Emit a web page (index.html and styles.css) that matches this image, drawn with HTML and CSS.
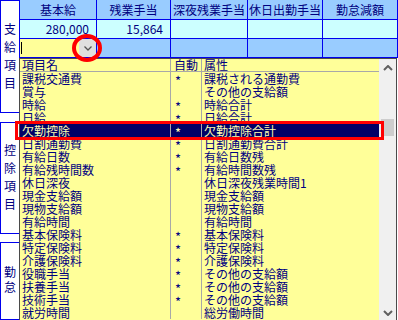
FILE: index.html
```html
<!DOCTYPE html>
<html lang="ja">
<head>
    <meta charset="UTF-8">
    <meta name="viewport" content="width=device-width, initial-scale=1.0">
    <title>給与項目設定</title>
    <link rel="stylesheet" href="styles.css">
</head>
<body>

    <div class="screen">
        <!-- Left group labels -->
        <div class="side">
            <div class="side-box box-pay">
                <span>支</span><span>給</span><span>項</span><span>目</span>
            </div>
            <div class="side-box box-deduct">
                <span>控</span><span>除</span><span>項</span><span>目</span>
            </div>
            <div class="side-box box-attend">
                <span>勤</span><span>怠</span>
            </div>
        </div>

        <!-- Item grid -->
        <div class="main">
            <div class="grid">
                <div class="cell head">基本給</div>
                <div class="cell head">残業手当</div>
                <div class="cell head">深夜残業手当</div>
                <div class="cell head">休日出勤手当</div>
                <div class="cell head">勤怠減額</div>

                <div class="cell val">280,000</div>
                <div class="cell val">15,864</div>
                <div class="cell val"></div>
                <div class="cell val"></div>
                <div class="cell val"></div>

                <div class="cell input">
                    <span class="caret"></span>
                    <span class="drop-btn">
                        <svg width="8" height="5" viewBox="0 0 8 5"><polyline points="0.5,0.5 4,4 7.5,0.5" fill="none" stroke="#555" stroke-width="1.3"/></svg>
                    </span>
                </div>
                <div class="cell blank"></div>
                <div class="cell blank"></div>
                <div class="cell blank"></div>
                <div class="cell blank"></div>
            </div>
        </div>

        <!-- Dropdown list -->
        <div class="popup">
            <div class="list">
                <div class="row list-head">
                    <span class="c-name">項目名</span><span class="c-auto">自動</span><span class="c-attr">属性</span>
                </div>
                <div class="row"><span class="c-name">課税交通費</span><span class="c-auto"><i class="star">*</i></span><span class="c-attr">課税される通勤費</span></div>
                <div class="row"><span class="c-name">賞与</span><span class="c-auto"></span><span class="c-attr">その他の支給額</span></div>
                <div class="row"><span class="c-name">時給</span><span class="c-auto"><i class="star">*</i></span><span class="c-attr">時給合計</span></div>
                <div class="row"><span class="c-name">日給</span><span class="c-auto"><i class="star">*</i></span><span class="c-attr">日給合計</span></div>
                <div class="row selected"><span class="c-name">欠勤控除</span><span class="c-auto"><i class="star">*</i></span><span class="c-attr">欠勤控除合計</span></div>
                <div class="row"><span class="c-name">日割通勤費</span><span class="c-auto"><i class="star">*</i></span><span class="c-attr">日割通勤費合計</span></div>
                <div class="row"><span class="c-name">有給日数</span><span class="c-auto"><i class="star">*</i></span><span class="c-attr">有給日数残</span></div>
                <div class="row"><span class="c-name">有給残時間数</span><span class="c-auto"><i class="star">*</i></span><span class="c-attr">有給時間数残</span></div>
                <div class="row"><span class="c-name">休日深夜</span><span class="c-auto"></span><span class="c-attr">休日深夜残業時間1</span></div>
                <div class="row"><span class="c-name">現金支給額</span><span class="c-auto"></span><span class="c-attr">現金支給額</span></div>
                <div class="row"><span class="c-name">現物支給額</span><span class="c-auto"></span><span class="c-attr">現物支給額</span></div>
                <div class="row"><span class="c-name">有給時間</span><span class="c-auto"></span><span class="c-attr">有給時間</span></div>
                <div class="row"><span class="c-name">基本保険料</span><span class="c-auto"><i class="star">*</i></span><span class="c-attr">基本保険料</span></div>
                <div class="row"><span class="c-name">特定保険料</span><span class="c-auto"><i class="star">*</i></span><span class="c-attr">特定保険料</span></div>
                <div class="row"><span class="c-name">介護保険料</span><span class="c-auto"><i class="star">*</i></span><span class="c-attr">介護保険料</span></div>
                <div class="row"><span class="c-name">役職手当</span><span class="c-auto"><i class="star">*</i></span><span class="c-attr">その他の支給額</span></div>
                <div class="row"><span class="c-name">扶養手当</span><span class="c-auto"><i class="star">*</i></span><span class="c-attr">その他の支給額</span></div>
                <div class="row"><span class="c-name">技術手当</span><span class="c-auto"><i class="star">*</i></span><span class="c-attr">その他の支給額</span></div>
                <div class="row"><span class="c-name">就労時間</span><span class="c-auto"></span><span class="c-attr">総労働時間</span></div>
            </div>
            <div class="scroll">
                <div class="sb-btn">
                    <svg width="10" height="6" viewBox="0 0 10 6"><polyline points="1,5 5,1 9,5" fill="none" stroke="#606060" stroke-width="2"/></svg>
                </div>
                <div class="sb-track">
                    <div class="sb-thumb"></div>
                </div>
                <div class="sb-btn">
                    <svg width="10" height="6" viewBox="0 0 10 6"><polyline points="1,1 5,5 9,1" fill="none" stroke="#606060" stroke-width="2"/></svg>
                </div>
            </div>
        </div>

        <!-- Annotation marks -->
        <div class="mark-circle"></div>
        <div class="mark-rect"></div>
    </div>

</body>
</html>
```

FILE: styles.css
```css
body {
    margin: 0;
    padding: 0;
    font-family: "Noto Sans CJK JP", sans-serif;
    font-size: 12px;
    color: #000080;
    background-color: #fff;
}
.screen {
    position: relative;
    width: 398px;
    height: 320px;
    overflow: hidden;
    display: flex;
}

/* Left labels */
.side {
    width: 20px;
    display: flex;
    flex-direction: column;
}
.side-box {
    box-sizing: border-box;
    border: 1px solid #0000ee;
    display: flex;
    flex-direction: column;
    align-items: center;
    line-height: 18px;
}
.box-pay {
    height: 113px;
    padding-top: 19px;
}
.box-deduct {
    height: 112px;
    margin-top: 9px;
    padding-top: 18px;
}
.box-attend {
    flex: 1;
    margin-top: 8px;
    padding-top: 21px;
    line-height: 15px;
}

/* Grid */
.main {
    width: 378px;
}
.grid {
    display: grid;
    grid-template-columns: 76px 73px 76px 74px 74px;
    grid-template-rows: 19px 18px 18px;
    gap: 1px;
    background: #0000ee;
    border-right: 1px solid #0000ee;
    border-bottom: 1px solid #0000ee;
}
.cell {
    white-space: nowrap;
    overflow: hidden;
}
.head {
    background: #99ccff;
    text-align: center;
    line-height: 19px;
}
.val {
    background: #ccffff;
    text-align: right;
    padding-right: 7px;
    line-height: 18px;
}
.blank {
    background: #99ccff;
}
.input {
    background: #ffff99;
    display: flex;
    justify-content: space-between;
}
.caret {
    width: 1px;
    height: 12px;
    margin: 3px 0 0 1px;
    background: #000;
}
.drop-btn {
    width: 17px;
    background: #e0e0e0;
    display: flex;
    align-items: center;
    justify-content: center;
    padding-top: 1px;
}

/* Dropdown */
.popup {
    position: absolute;
    left: 19px;
    top: 58px;
    width: 378px;
    height: 264px;
    box-sizing: border-box;
    border: 1px solid #4a4a4a;
    background: #ffff99;
    display: flex;
}
.list {
    width: 359px;
    overflow: hidden;
}
.row {
    display: flex;
    height: 13px;
    line-height: 13px;
    white-space: nowrap;
}
.list-head {
    height: 12px;
    line-height: 12px;
    border-bottom: 1px solid #a8a8a8;
}
.c-name {
    box-sizing: border-box;
    width: 151px;
    padding-left: 2px;
    border-right: 1px solid #a8a8a8;
}
.c-auto {
    box-sizing: border-box;
    width: 31px;
    padding-left: 3px;
    border-right: 1px solid #a8a8a8;
}
.c-attr {
    flex: 1;
    padding-left: 2px;
}
.star {
    position: relative;
    top: 2px;
    left: 1px;
    font-style: normal;
    font-size: 13px;
}
.selected {
    background: #000066;
    color: #ffffb0;
}

/* Scrollbar */
.scroll {
    width: 17px;
    background: #f0f0f0;
    display: flex;
    flex-direction: column;
}
.sb-btn {
    height: 17px;
    display: flex;
    align-items: center;
    justify-content: center;
}
.sb-track {
    flex: 1;
}
.sb-thumb {
    width: 13px;
    height: 17px;
    margin: 43px 0 0 2px;
    background: #cdcdcd;
}

/* Annotation marks */
.mark-circle {
    position: absolute;
    left: 72px;
    top: 34px;
    width: 30px;
    height: 28px;
    box-sizing: border-box;
    border: 4px solid #ff0000;
    border-radius: 50%;
}
.mark-rect {
    position: absolute;
    left: 15px;
    top: 121px;
    width: 369px;
    height: 19px;
    box-sizing: border-box;
    border: 3px solid #ff0000;
}
```
